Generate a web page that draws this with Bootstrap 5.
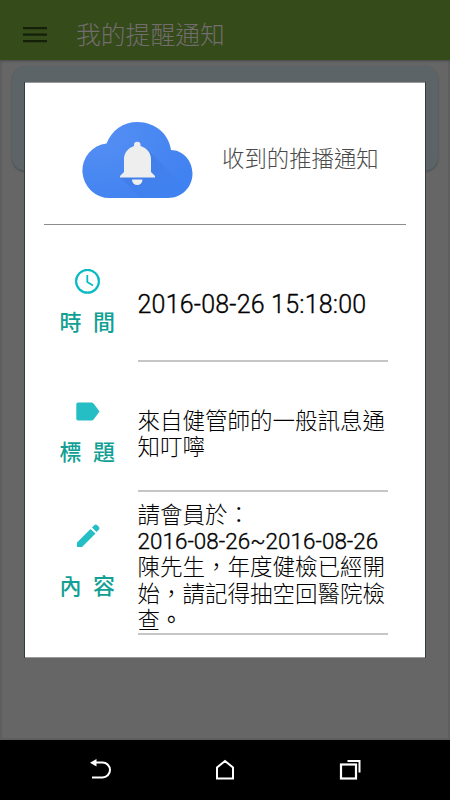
<!DOCTYPE html>
<html lang="zh-Hant">
<head>
<meta charset="utf-8">
<meta name="viewport" content="width=device-width, initial-scale=1">
<title>我的提醒通知</title>
<link href="https://cdn.jsdelivr.net/npm/bootstrap@5.3.0/dist/css/bootstrap.min.css" rel="stylesheet">
<style>
body{font-family:Roboto,"Noto Sans CJK TC",sans-serif;background:#666;height:800px;overflow:hidden}
svg{display:block;flex:none}
.app-bar{height:60px;background:#354b19;padding:10px 0 0 23px;gap:29px;box-shadow:0 1px 2px #484848;z-index:1}
.app-title{font-size:24.8px;line-height:36px;font-weight:300;color:#736d70;padding-top:4px}
.page{padding:6px 10px;border:solid #5e5e5e;border-width:0 2px 2px}
.note-card{height:105px;border-radius:14px;background:#5c6468;box-shadow:0 1px 2px #434b4e}
.dialog-box{left:25px;top:82px;width:400px;height:576px;background:#fff;border-top:1px solid #999;border-bottom:1px solid #999;box-shadow:-1px 0 0 #333c3e,1px 0 0 #333c3e;padding:0 19px}
.dialog-head{height:142px;border-bottom:1px solid #8c8c8c;padding:39px 0 0 38px;gap:29px}
.dialog-title{font-size:22.4px;line-height:34px;font-weight:300;color:#4a4a4a;margin-top:20px}
.field{padding:0 18px 0 15.5px}
.field-key{width:78px;color:#11a093;font-size:22px;line-height:30px;font-weight:500}
.field-val{width:250px;border-bottom:2px solid #c6c6c6;color:#000;font-size:22.5px;line-height:26.4px;font-weight:300;white-space:nowrap}
.latin{font-weight:300;-webkit-text-stroke:.35px #000}
.date-text{font-size:25px;line-height:30px;letter-spacing:.2px}
.date-range{font-size:22.4px;line-height:1;letter-spacing:.05px}
.f-time{height:137px}.f-title{height:130px}.f-body{height:143px}
.f-time .field-key{padding-top:44px}.f-title .field-key{padding-top:39px}.f-body .field-key{padding-top:31px}
.f-time svg{margin-bottom:13px}.f-title svg{margin-bottom:11px}.f-body svg{margin-bottom:23px}
.f-time .field-val{padding-top:65px}.f-title .field-val{padding-top:46px}.f-body .field-val{padding-top:9.500px}
.key-text{word-spacing:6px}
.nav-keys{height:60px;padding:0 88px}
</style>
</head>
<body class="d-flex flex-column position-relative m-0">
<header class="app-bar d-flex align-items-start">
  <svg width="24" height="36" viewBox="0 0 24 36" class="mt-1"><path d="M0 14h24M0 20.500h24M0 27h24" transform="translate(0 .1)" stroke="#14200a" stroke-width="2.400"/></svg>
  <div class="app-title mt-1">我的提醒通知</div>
</header>
<main class="page flex-grow-1"><div class="note-card"></div></main>
<section class="dialog-box position-absolute" role="dialog">
  <div class="dialog-head d-flex align-items-start">
    <svg width="111" height="77" viewBox="0 0 111 77">
      <defs>
        <radialGradient id="sky" cx=".12" cy=".15" r="1"><stop stop-color="#558ff3"/><stop offset="1" stop-color="#4082f1"/></radialGradient>
        <linearGradient id="shade" x1="0" y1="0" x2="1" y2="1"><stop stop-color="#2f68cf"/><stop offset="1" stop-color="#4082f1" stop-opacity="0"/></linearGradient>
        <clipPath id="cloud"><path d="M28 76A27.400 27.400 0 0 1 24.500 21.400C30 8 41 0 55.500 0C73 0 87 12 89 28C101 28 110.500 39 110.500 51.500C110.500 65 100 76 86 76Z"/></clipPath>
      </defs>
      <g clip-path="url(#cloud)">
        <rect width="111" height="77" fill="url(#sky)"/>
        <path d="M65 27L108 70V77H59L38 55Z" fill="url(#shade)" opacity=".55"/>
      </g>
      <path d="M52 24V23A3.200 3.200 0 0 1 58.500 23V24C65 26 69 31 69 37V50L73 54V55.500H38V54L42 50V37C42 31 46 26 52 24ZM50 57.500H60.500A5.250 5.500 0 0 1 50 57.500Z" fill="#eee"/>
    </svg>
    <div class="dialog-title">收到的推播通知</div>
  </div>
  <div class="field f-time d-flex">
    <div class="field-key">
      <svg width="26" height="26" viewBox="0 0 26 26" style="margin-left:15px" fill="none" stroke="#0abbc3" stroke-width="2.200"><circle cx="12.500" cy="12.300" r="11.400"/><path d="M12.300 6V13L18 16.500" stroke-width="1.800"/></svg>
      <div class="key-text">時 間</div>
    </div>
    <div class="field-val latin"><div class="date-text">2016-08-26 15:18:00</div></div>
  </div>
  <div class="field f-title d-flex">
    <div class="field-key">
      <svg width="26" height="26" viewBox="0 0 26 26" style="margin-left:15px"><path d="M3 1.500H16.500Q18 1.500 19 3L24.500 10.500L19 18Q18 19.500 16.500 19.500H3Q1.300 19.500 1.300 17.800V3.200Q1.300 1.500 3 1.500Z" fill="#26bec5"/></svg>
      <div class="key-text">標 題</div>
    </div>
    <div class="field-val">來自健管師的一般訊息通<br>知叮嚀</div>
  </div>
  <div class="field f-body d-flex">
    <div class="field-key">
      <svg width="26" height="26" viewBox="0 0 26 26" style="margin-left:15px" fill="#26bec5"><path d="M2 19.500L15.500 6L20.500 10.500L7 24H2ZM17 4.500L19.500 2Q20.700 1 22 2L24 4Q25 5.200 24 6.500L21.500 9Z"/></svg>
      <div class="key-text">內 容</div>
    </div>
    <div class="field-val">請會員於：<br><span class="latin date-range">2016-08-26~2016-08-26</span><br>陳先生，年度健檢已經開<br>始，請記得抽空回醫院檢<br>查<b>。</b></div>
  </div>
</section>
<nav class="nav-keys bg-black d-flex justify-content-between align-items-center">
  <svg width="24" height="24" viewBox="0 0 24 24" fill="none" stroke="#fff" stroke-width="2"><path d="M7 5.500H15A7 7 0 0 1 15 20.500H4.500" transform="translate(-.5 -1)"/><path d="M2 4.700L8.500 1V8.500Z" fill="#fff" stroke="none"/></svg>
  <svg width="24" height="24" viewBox="0 0 24 24" fill="none" stroke="#fff" stroke-width="2"><path d="M4 20.500V9.500L12 3L20 9.500V20.500Z"/></svg>
  <svg width="24" height="24" viewBox="0 0 24 24" fill="none" stroke="#fff" stroke-width="2"><rect x="3" y="6.500" width="15" height="14" stroke-width="2.200"/><path d="M9.500 3H21.500V14.500"/></svg>
</nav>
<script src="https://cdn.jsdelivr.net/npm/bootstrap@5.3.0/dist/js/bootstrap.bundle.min.js"></script>
</body>
</html>
